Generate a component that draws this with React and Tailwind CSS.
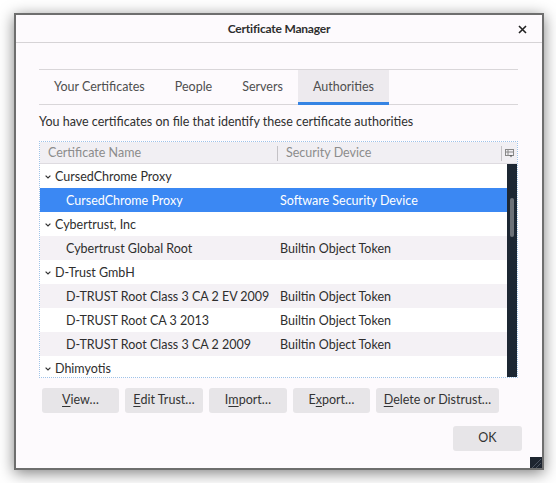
import React from "react";

const font = { fontFamily: "Lato, 'Noto Sans', sans-serif" };

function Chevron() {
  return (
    <svg width="6" height="4" viewBox="0 0 6 4" className="mr-[4px] ml-[5px]">
      <path d="M0.6 0.6 L3 3 L5.4 0.6" fill="none" stroke="#333" strokeWidth="1.2" />
    </svg>
  );
}

const rows = [
  { type: "group", name: "CursedChrome Proxy" },
  { type: "item", name: "CursedChrome Proxy", dev: "Software Security Device", selected: true },
  { type: "group", name: "Cybertrust, Inc" },
  { type: "item", name: "Cybertrust Global Root", dev: "Builtin Object Token" },
  { type: "group", name: "D-Trust GmbH" },
  { type: "item", name: "D-TRUST Root Class 3 CA 2 EV 2009", dev: "Builtin Object Token" },
  { type: "item", name: "D-TRUST Root CA 3 2013", dev: "Builtin Object Token" },
  { type: "item", name: "D-TRUST Root Class 3 CA 2 2009", dev: "Builtin Object Token" },
  { type: "group", name: "Dhimyotis" },
];

function Btn({ pre, key1, post, w }) {
  return (
    <div className={`h-[25px] ${w} bg-[#e7e5e8] rounded-[3px] flex items-center justify-center text-[12.5px] text-[#333]`}>
      {pre}
      <span className="underline underline-offset-2">{key1}</span>
      {post}
    </div>
  );
}

export default function App() {
  return (
    <div className="w-[556px] h-[483px] bg-white pt-[13px] pl-[14px] overflow-hidden" style={font}>
      <div className="relative w-[530px] h-[457px] border-2 border-[#6e6e6e] bg-[#fdfafd] flex flex-col shadow-[0_3px_14px_rgba(0,0,0,0.5)]">
        {/* title bar */}
        <div className="relative h-[28px] shrink-0 border-b border-[#d6d3d6] flex items-center justify-center">
          <span className="text-[12px] font-bold tracking-[-0.2px] text-[#2e2e2e]">Certificate Manager</span>
          <svg width="9" height="9" viewBox="0 0 9 9" className="absolute right-[15px] top-[10px]">
            <path d="M1 1 L8 8 M8 1 L1 8" stroke="#222" strokeWidth="1.6" />
          </svg>
        </div>
        {/* body */}
        <div className="flex flex-col pl-[23px] pr-[20px] pt-[26px]">
          {/* tabs */}
          <div className="mr-[4px] h-[36px] border-y border-[#d9d6d9] flex text-[12.5px] text-[#4f4f4f]">
            <div className="px-[15px] flex items-center">Your Certificates</div>
            <div className="px-[15px] flex items-center">People</div>
            <div className="px-[15px] flex items-center">Servers</div>
            <div className="px-[15px] flex items-center bg-[#edeaee] relative">
              Authorities
              <div className="absolute left-0 right-0 bottom-[-1px] h-[3px] bg-[#3584e4]" />
            </div>
          </div>
          <div className="mt-[8px] h-[18px] leading-[18px] text-[12.5px] text-[#2f2f2f]">
            You have certificates on file that identify these certificate authorities
          </div>
          {/* tree */}
          <div className="mt-[10px] mr-[4px] h-[237px] border border-dotted border-[#9fc2e8] bg-white flex flex-col overflow-hidden">
            <div className="h-[22px] shrink-0 bg-[#f1eff3] border-b border-[#dedbe0] flex items-center pt-[2px] text-[12.5px] text-[#8c8c8c]">
              <div className="w-[237px] pl-[8px]">Certificate Name</div>
              <div className="w-px h-[15px] bg-[#c4c2c6]" />
              <div className="flex-1 pl-[8px]">Security Device</div>
              <div className="w-px h-[15px] bg-[#c4c2c6]" />
              <svg width="9" height="9" viewBox="0 0 9 9" className="mx-[3px]">
                <rect x="0.5" y="0.5" width="8" height="6" fill="none" stroke="#888" />
                <path d="M0.5 3 H8.5 M3 0.5 V6.5" stroke="#888" />
                <path d="M4.5 6 L7.5 6 L6 8.5 Z" fill="#666" />
              </svg>
            </div>
            <div className="flex flex-1 min-h-0">
              <div className="flex-1 flex flex-col text-[12.5px] text-[#2e2e2e]">
                {rows.map((r, i) => {
                  const bg = r.selected ? "bg-[#3b88f3] text-white" : i % 2 === 1 ? "bg-[#f4f1f5]" : "bg-white";
                  return (
                    <div key={i} className={`h-[24px] shrink-0 flex items-center pt-[2px] ${bg}`}>
                      {r.type === "group" ? (
                        <div className="flex items-center">
                          <Chevron />
                          <span>{r.name}</span>
                        </div>
                      ) : (
                        <>
                          <div className="w-[240px] pl-[26px] whitespace-nowrap">{r.name}</div>
                          <div>{r.dev}</div>
                        </>
                      )}
                    </div>
                  );
                })}
              </div>
              <div className="w-[10px] bg-[#1d2733] flex flex-col items-center">
                <div className="mt-[34px] w-[4px] h-[39px] rounded-full bg-[#6c7178]" />
              </div>
            </div>
          </div>
          {/* buttons */}
          <div className="mt-[10px] flex gap-[6px] pl-[3px]">
            <Btn pre="" key1="V" post="iew…" w="w-[77px]" />
            <Btn pre="" key1="E" post="dit Trust…" w="w-[78px]" />
            <Btn pre="I" key1="m" post="port…" w="w-[78px]" />
            <Btn pre="E" key1="x" post="port…" w="w-[77px]" />
            <Btn pre="" key1="D" post="elete or Distrust…" w="w-[123px]" />
          </div>
          <div className="mt-[13px] flex justify-end">
            <div className="h-[25px] w-[69px] bg-[#e7e5e8] rounded-[3px] flex items-center justify-center text-[12.5px] text-[#333]">
              OK
            </div>
          </div>
        </div>
        <div className="absolute right-0 bottom-0 w-[12px] h-[11px] bg-[#1e2530]">
          <svg width="12" height="11" viewBox="0 0 12 11">
            <path d="M11 2 L2 11 M11 6 L6 11" stroke="#4a5260" strokeWidth="1" />
          </svg>
        </div>
      </div>
    </div>
  );
}
